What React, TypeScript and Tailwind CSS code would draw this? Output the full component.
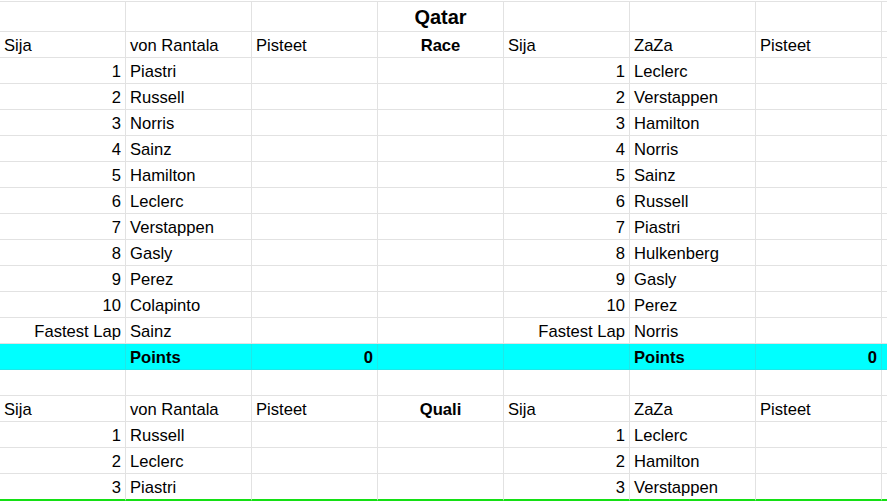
type Cell = { t?: string; align?: 'l' | 'r' | 'c'; bold?: boolean; big?: boolean }

const leftRace = ['Piastri', 'Russell', 'Norris', 'Sainz', 'Hamilton', 'Leclerc', 'Verstappen', 'Gasly', 'Perez', 'Colapinto']
const rightRace = ['Leclerc', 'Verstappen', 'Hamilton', 'Norris', 'Sainz', 'Russell', 'Piastri', 'Hulkenberg', 'Gasly', 'Perez']
const leftQuali = ['Russell', 'Leclerc', 'Piastri']
const rightQuali = ['Leclerc', 'Hamilton', 'Verstappen']

type Row = { cells: Cell[]; kind?: 'title' | 'points' | 'last' }

function header(mid: string): Row {
  return {
    cells: [
      { t: 'Sija' },
      { t: 'von Rantala' },
      { t: 'Pisteet' },
      { t: mid, align: 'c', bold: true },
      { t: 'Sija' },
      { t: 'ZaZa' },
      { t: 'Pisteet' },
      {},
    ],
  }
}

function pos(label: string, a: string, b: string): Row {
  return {
    cells: [{ t: label, align: 'r' }, { t: a }, {}, {}, { t: label, align: 'r' }, { t: b }, {}, {}],
  }
}

const rows: Row[] = [
  { kind: 'title', cells: [{}, {}, {}, { t: 'Qatar', align: 'c', bold: true, big: true }, {}, {}, {}, {}] },
  header('Race'),
  ...leftRace.map((d, i) => pos(String(i + 1), d, rightRace[i])),
  pos('Fastest Lap', 'Sainz', 'Norris'),
  {
    kind: 'points',
    cells: [
      {},
      { t: 'Points', bold: true },
      { t: '0', align: 'r', bold: true },
      {},
      {},
      { t: 'Points', bold: true },
      { t: '0', align: 'r', bold: true },
      {},
    ],
  },
  { cells: [{}, {}, {}, {}, {}, {}, {}, {}] },
  header('Quali'),
  ...leftQuali.map((d, i) => ({ ...pos(String(i + 1), d, rightQuali[i]), kind: i === 2 ? ('last' as const) : undefined })),
]

export default function App() {
  return (
    <div className="w-[887px] h-[501px] overflow-hidden bg-white pt-px font-['Liberation_Sans',Arial,sans-serif] text-[16.6px] text-black">
      <div className="grid grid-cols-[repeat(7,126px)_1fr]">
        {rows.map((row, ri) =>
          row.cells.map((c, ci) => {
            const isTitle = row.kind === 'title'
            const isPoints = row.kind === 'points'
            const isLast = row.kind === 'last'
            return (
              <div
                key={`${ri}-${ci}`}
                className={[
                  'flex items-center px-[4px] whitespace-nowrap overflow-hidden border-r',
                  isTitle ? 'h-[31px] border-t border-b border-[#e2e2e2]' : 'h-[26px] pt-[4px]',
                  isPoints ? 'bg-[#00ffff] border-[#1ee8e8] border-b' : '',
                  isLast ? 'border-[#e2e2e2] border-b-2 border-b-[#14e014] h-[27px]' : '',
                  !isTitle && !isPoints && !isLast ? 'border-b border-[#e2e2e2]' : '',
                  c.align === 'r' ? 'justify-end' : c.align === 'c' ? 'justify-center' : 'justify-start',
                  c.bold ? 'font-bold' : '',
                  c.big ? 'text-[20px]' : '',
                ].join(' ')}
              >
                {c.t}
              </div>
            )
          })
        )}
      </div>
    </div>
  )
}
